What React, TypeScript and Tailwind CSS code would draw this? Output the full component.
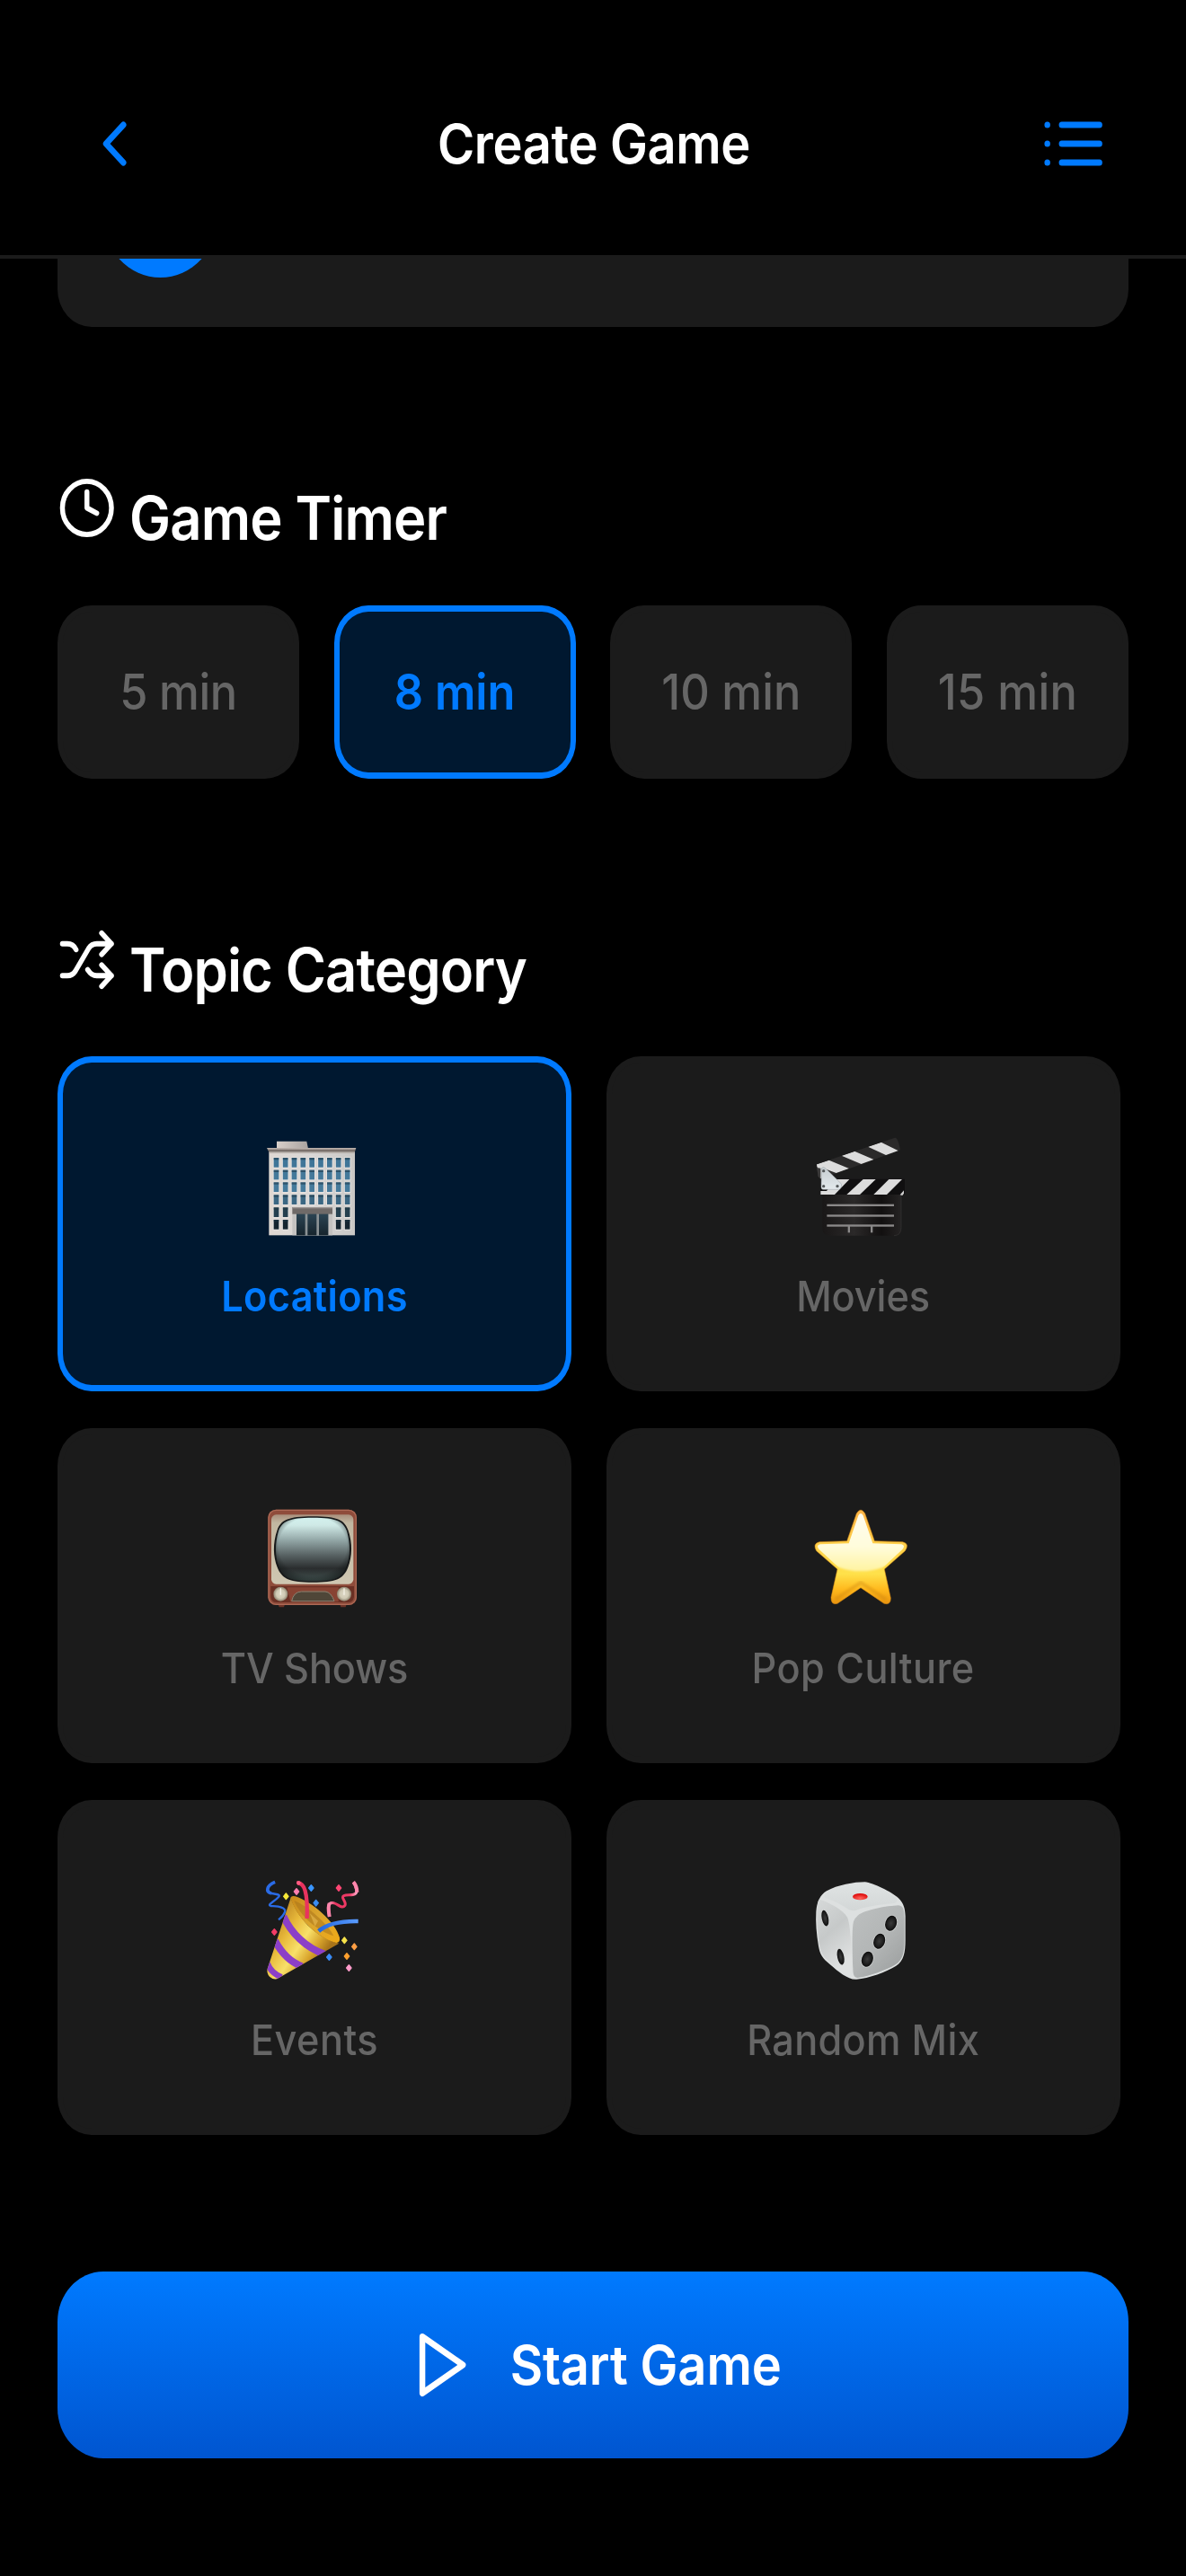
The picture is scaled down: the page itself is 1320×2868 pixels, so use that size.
import React from "react";

type IconProps = { className: string; children: React.ReactNode };

function LineIcon({ className, children }: IconProps) {
  return (
    <svg
      viewBox="0 0 24 24"
      preserveAspectRatio="none"
      fill="none"
      stroke="currentColor"
      strokeWidth="2"
      strokeLinecap="round"
      strokeLinejoin="round"
      className={className}
    >
      {children}
    </svg>
  );
}

const emojiClass = "h-[116px] w-[120px] overflow-visible";

function BuildingEmoji() {
  const cols = [224, 254.5, 284, 313.5, 343, 372.5, 402, 431.5, 461.5];
  const tops = [117, 158, 199, 241, 283, 324];
  const fills = ["#3f7598", "#44799a", "#457a9b", "#3b6783", "#25404f", "#14242f"];
  return (
    <svg viewBox="180 48 360 348" preserveAspectRatio="none" className={emojiClass}>
      <defs>
        <linearGradient id="b-wall" x1="0" y1="0" x2="1" y2="0">
          <stop offset="0" stopColor="#e0d8d2" />
          <stop offset="0.5" stopColor="#d9d7d6" />
          <stop offset="1" stopColor="#c9c7c5" />
        </linearGradient>
        <linearGradient id="b-roof" x1="0" y1="0" x2="0" y2="1">
          <stop offset="0" stopColor="#c7bdb7" />
          <stop offset="1" stopColor="#574d49" />
        </linearGradient>
        <linearGradient id="b-top" x1="0" y1="0" x2="1" y2="0">
          <stop offset="0" stopColor="#d9d0ca" />
          <stop offset="1" stopColor="#a9a3a0" />
        </linearGradient>
        <linearGradient id="b-door" x1="0" y1="0" x2="0" y2="1">
          <stop offset="0" stopColor="#2c4554" />
          <stop offset="1" stopColor="#16242d" />
        </linearGradient>
      </defs>
      <path d="M234 62H334L339 86H234Z" fill="url(#b-top)" />
      <rect x="208" y="92" width="287" height="284" fill="url(#b-wall)" />
      <path d="M201 84H499L495 97H207Z" fill="url(#b-roof)" />
      <rect x="209" y="97" width="285" height="5" fill="#a89f99" opacity="0.7" />
      {tops.map((y, r) =>
        cols.map((x, c) =>
          r >= 4 && c > 1 && c < 7 ? null : (
            <g key={`${r}-${c}`}>
              <rect x={x - 3} y={y - 2} width="23" height="37" fill="#e6e3e1" />
              <rect x={x} y={y} width="17" height="32" fill={fills[r]} />
              <rect x={x} y={y} width="17" height="7" fill="#1c3444" opacity="0.55" />
            </g>
          )
        )
      )}
      <rect x="286" y="303" width="134" height="73" fill="#c4c2c0" />
      <rect x="300" y="303" width="106" height="73" fill="#8b9295" />
      <rect x="300" y="303" width="29" height="73" fill="url(#b-door)" />
      <rect x="337" y="303" width="30" height="73" fill="url(#b-door)" />
      <rect x="375" y="303" width="31" height="73" fill="url(#b-door)" />
      <rect x="286" y="282" width="134" height="23" fill="#6f6a68" />
      <rect x="286" y="282" width="134" height="4" fill="#999492" />
    </svg>
  );
}

function ClapperEmoji() {
  return (
    <svg viewBox="123 48 360 348" preserveAspectRatio="none" className={emojiClass}>
      <defs>
        <linearGradient id="c-body" x1="0" y1="0" x2="1" y2="0">
          <stop offset="0" stopColor="#191717" />
          <stop offset="0.4" stopColor="#2b2929" />
          <stop offset="0.75" stopColor="#121010" />
          <stop offset="1" stopColor="#252323" />
        </linearGradient>
        <linearGradient id="c-hinge" x1="0" y1="0" x2="0" y2="1">
          <stop offset="0" stopColor="#c6cdd1" />
          <stop offset="1" stopColor="#e3e9ec" />
        </linearGradient>
        <clipPath id="c-arm">
          <path d="M147 139L408 50Q419 50 426 91L160 187L152 180Z" />
        </clipPath>
        <clipPath id="c-bar">
          <path d="M160 188H438V240H160Z" />
        </clipPath>
      </defs>
      <path d="M166 238H429V350Q429 377 405 377H190Q166 377 166 350Z" fill="url(#c-body)" />
      <path d="M429 242V350Q429 377 405 377" fill="none" stroke="#353333" strokeWidth="2" />
      <path d="M147 139L408 50Q419 50 426 91L216 168L160 187L152 180Z" fill="#2b2a2a" />
      <g clipPath="url(#c-arm)" fill="#dcdcdc">
        <path d="M318 80L362 65L426 97L386 112Z" />
        <path d="M230 110L273 95L343 125L301 140Z" />
        <path d="M140 141L188 125L257 154L214 169L180 156L160 190L150 150Z" />
      </g>
      <path d="M147 150L160 152V188L152 180Z" fill="#3a3939" />
      <path d="M160 188H441V240H160Z" fill="#100f10" />
      <g clipPath="url(#c-bar)" fill="#dcdcdc">
        <path d="M302 189H344L290 241H246Z" />
        <path d="M388 189H432L380 241H336Z" />
        <path d="M210 189H256L206 241H158V228H180Z" />
      </g>
      <path d="M425 241L438 226V236L433 243Z" fill="#d0d0d0" />
      <path d="M163 152Q168 146 175 151L230 205Q230 223 218 223H170Q162 223 162 215Z" fill="url(#c-hinge)" stroke="#9da3a6" strokeWidth="1.5" />
      <g fill="#55595b">
        <circle cx="170" cy="161" r="5" />
        <circle cx="170" cy="212" r="5" />
        <circle cx="216" cy="212" r="5" />
      </g>
      <g fill="#8b8989">
        <rect x="181" y="272" width="224" height="7" />
        <rect x="181" y="307" width="224" height="7" />
        <rect x="181" y="340" width="224" height="7" />
        <rect x="251" y="345" width="7" height="22" />
        <rect x="327" y="345" width="7" height="22" />
      </g>
    </svg>
  );
}

function TvEmoji() {
  return (
    <svg viewBox="180 60 360 348" preserveAspectRatio="none" className={emojiClass}>
      <defs>
        <linearGradient id="t-screen" x1="0" y1="0" x2="0" y2="1">
          <stop offset="0" stopColor="#d3f1ee" />
          <stop offset="0.12" stopColor="#cfe9e6" />
          <stop offset="0.35" stopColor="#94a8a8" />
          <stop offset="0.6" stopColor="#566061" />
          <stop offset="0.8" stopColor="#2a2d2e" />
          <stop offset="1" stopColor="#41514f" />
        </linearGradient>
        <radialGradient id="t-edge" cx="0.5" cy="0.45" r="0.62">
          <stop offset="0.75" stopColor="#101414" stopOpacity="0" />
          <stop offset="1" stopColor="#101414" stopOpacity="0.7" />
        </radialGradient>
        <linearGradient id="t-frame" x1="0" y1="0" x2="0" y2="1">
          <stop offset="0" stopColor="#a98f7c" />
          <stop offset="0.12" stopColor="#c1b7a1" />
          <stop offset="1" stopColor="#cfc7b2" />
        </linearGradient>
        <radialGradient id="t-knob">
          <stop offset="0" stopColor="#ded9c6" />
          <stop offset="0.6" stopColor="#d0cab4" />
          <stop offset="1" stopColor="#8d8470" />
        </radialGradient>
      </defs>
      <path d="M238 376H262L258 388H242ZM444 376H468L464 388H448Z" fill="#6c3327" />
      <rect x="205" y="62" width="296" height="319" rx="26" fill="#8f4c3b" />
      <rect x="207" y="64" width="292" height="315" rx="25" fill="none" stroke="#ad6a56" strokeWidth="4" />
      <path d="M214 318H492V350Q492 372 472 372H234Q214 372 214 350Z" fill="#6a3024" />
      <path d="M268 322H440V370H280Z" fill="#884333" />
      <rect x="216" y="79" width="274" height="232" rx="16" fill="url(#t-frame)" />
      <path d="M354 85C440 85 460 98 472 130C488 175 486 220 472 255C456 296 430 305 354 305C280 305 252 296 236 255C222 220 220 175 236 130C248 98 270 85 354 85Z" fill="#17191a" />
      <path d="M354 89C436 89 456 102 468 134C480 175 480 218 467 250C452 290 428 301 354 301C282 301 256 290 241 250C228 218 228 175 240 134C252 102 274 89 354 89Z" fill="url(#t-screen)" />
      <path d="M354 89C436 89 456 102 468 134C480 175 480 218 467 250C452 290 428 301 354 301C282 301 256 290 241 250C228 218 228 175 240 134C252 102 274 89 354 89Z" fill="url(#t-edge)" />
      <path d="M284 368Q290 337 316 336H396Q416 338 426 368Z" fill="#4f4638" stroke="#8b8271" strokeWidth="3" />
      <circle cx="247" cy="344" r="24" fill="url(#t-knob)" />
      <circle cx="459" cy="344" r="24" fill="url(#t-knob)" />
      <path d="M247 326V346M459 326V346" stroke="#f3f0e4" strokeWidth="4" strokeLinecap="round" />
    </svg>
  );
}

function StarEmoji() {
  const star =
    "M370 75Q384 52 398 75L430 167L524 170Q548 176 532 200L463 261L484 358Q484 382 462 376L384 323L306 376Q284 382 285 355L306 261L236 200Q222 176 246 170L338 167Z";
  return (
    <svg viewBox="213 60 360 348" preserveAspectRatio="none" className={emojiClass}>
      <defs>
        <linearGradient id="s-fill" x1="0" y1="0" x2="0" y2="1">
          <stop offset="0" stopColor="#fdb548" />
          <stop offset="0.45" stopColor="#ffd54a" />
          <stop offset="0.68" stopColor="#ffe14a" />
          <stop offset="0.85" stopColor="#ffb81c" />
          <stop offset="1" stopColor="#e8930e" />
        </linearGradient>
        <linearGradient id="s-shine" x1="0" y1="0" x2="0" y2="1">
          <stop offset="0" stopColor="#fffdf0" />
          <stop offset="0.6" stopColor="#fffcdc" />
          <stop offset="1" stopColor="#fff3a0" />
        </linearGradient>
        <clipPath id="s-clip">
          <path d="M376 82Q384 68 392 82L424 175L520 178Q534 182 524 194L456 258L476 366L384 314L293 366L313 258L244 194Q234 182 248 178L344 175Z" />
        </clipPath>
        <filter id="s-soft" x="-10%" y="-10%" width="120%" height="120%">
          <feGaussianBlur stdDeviation="3" />
        </filter>
      </defs>
      <path d={star} fill="url(#s-fill)" />
      <path d={star} fill="none" stroke="#d98a16" strokeWidth="3" opacity="0.55" />
      <g clipPath="url(#s-clip)">
        <path d="M220 60H548V200Q520 234 460 254Q384 282 308 254Q250 234 220 200Z" fill="url(#s-shine)" filter="url(#s-soft)" />
      </g>
      <path d="M300 362L384 306L468 362" fill="none" stroke="#c9820f" strokeWidth="12" opacity="0.35" filter="url(#s-soft)" />
    </svg>
  );
}

function PartyEmoji() {
  const confetti: [number, number, string][] = [
    [265, 124, "#f6e838"],
    [300, 108, "#ff7fb0"],
    [349, 96, "#3a96ff"],
    [365, 146, "#3a8cf0"],
    [441, 96, "#ff4674"],
    [226, 243, "#f23c66"],
    [460, 271, "#f6e24a"],
    [493, 292, "#ff9f45"],
    [468, 324, "#ffa02e"],
    [409, 327, "#3a8cf8"],
    [475, 363, "#ff9ccb"],
  ];
  return (
    <svg viewBox="180 72 360 348" preserveAspectRatio="none" className={emojiClass}>
      <defs>
        <linearGradient id="p-cone" x1="0.15" y1="0.3" x2="0.75" y2="0.75">
          <stop offset="0" stopColor="#c8942a" />
          <stop offset="0.25" stopColor="#e8b93a" />
          <stop offset="0.55" stopColor="#f8e06a" />
          <stop offset="0.8" stopColor="#d9a52c" />
          <stop offset="1" stopColor="#a8741a" />
        </linearGradient>
        <linearGradient id="p-mouth" x1="0" y1="0" x2="1" y2="1">
          <stop offset="0" stopColor="#c88a1a" />
          <stop offset="0.5" stopColor="#dba62e" />
          <stop offset="1" stopColor="#f0a916" />
        </linearGradient>
        <linearGradient id="p-blue" x1="0" y1="0" x2="1" y2="0">
          <stop offset="0" stopColor="#2268e0" />
          <stop offset="1" stopColor="#5a9cff" />
        </linearGradient>
        <linearGradient id="p-pink" x1="0" y1="0" x2="1" y2="0">
          <stop offset="0" stopColor="#ff9fc0" />
          <stop offset="0.25" stopColor="#e83560" />
          <stop offset="0.75" stopColor="#f03a66" />
          <stop offset="1" stopColor="#ffa5c4" />
        </linearGradient>
        <clipPath id="p-clip">
          <path d="M281 128C300 190 360 260 442 281L240 397Q226 406 210 392Q199 380 203 366Z" />
        </clipPath>
      </defs>
      <path d="M228 76C200 88 196 108 216 114C234 118 248 116 240 126C226 142 200 152 214 156C236 158 262 158 262 174Q256 190 240 202" fill="none" stroke="#2a6be6" strokeWidth="7" />
      <path d="M228 76C200 88 196 108 216 114" fill="none" stroke="#2a6be6" strokeWidth="11" />
      <path d="M281 128C300 190 360 260 442 281L240 397Q226 406 210 392Q199 380 203 366Z" fill="url(#p-cone)" />
      <g clipPath="url(#p-clip)" fill="none" stroke="#8c3fc8">
        <path d="M256 190C282 246 330 296 396 318" strokeWidth="24" />
        <path d="M228 272C246 306 276 342 318 358" strokeWidth="24" />
        <path d="M202 346C210 368 226 384 250 394" strokeWidth="20" />
      </g>
      <path d="M280 128Q284 120 296 124C352 142 430 210 444 262Q446 280 432 279C370 262 300 196 280 128Z" fill="url(#p-mouth)" />
      <path d="M292 138C338 156 404 216 424 256C370 240 312 190 292 138Z" fill="#a9741c" opacity="0.55" />
      <path d="M344 180L372 206L362 224Z" fill="#e9bd52" opacity="0.6" />
      <path d="M302 80C326 76 338 110 335 198" fill="none" stroke="#e9335f" strokeWidth="13" />
      <circle cx="307" cy="79" r="7" fill="#ff5b82" />
      <path d="M374 240C404 214 450 206 506 207" fill="none" stroke="url(#p-blue)" strokeWidth="14" />
      <path d="M410 192C406 164 402 142 424 146C440 150 452 168 462 154C468 142 446 128 458 122C474 116 508 126 499 98Q496 84 490 76" fill="none" stroke="url(#p-pink)" strokeWidth="9" />
      <path d="M410 192C407 172 404 158 410 148M502 110Q502 90 490 76" fill="none" stroke="#ff86ac" strokeWidth="12" />
      {confetti.map(([x, y, color]) => (
        <path key={`${x}-${y}`} d={`M${x} ${y - 10}L${x + 8} ${y}L${x} ${y + 10}L${x - 8} ${y}Z`} fill={color} stroke={color} strokeWidth="4" strokeLinejoin="round" />
      ))}
    </svg>
  );
}

function DiceEmoji() {
  const pips: [number, number, number, number, number][] = [
    [295, 197, 11, 27, -12],
    [347, 326, 11, 27, -12],
    [515, 214, 19, 26, 18],
    [476, 274, 19, 26, 18],
    [436, 334, 19, 26, 18],
  ];
  return (
    <svg viewBox="243 72 360 348" preserveAspectRatio="none" className={emojiClass}>
      <defs>
        <linearGradient id="d-left" x1="0" y1="0" x2="0.4" y2="1">
          <stop offset="0" stopColor="#d6d9d9" />
          <stop offset="0.5" stopColor="#c6c9c9" />
          <stop offset="1" stopColor="#dfe1e1" />
        </linearGradient>
        <linearGradient id="d-right" x1="0.1" y1="0" x2="0.9" y2="1">
          <stop offset="0" stopColor="#bcbfbf" />
          <stop offset="0.5" stopColor="#b3b6b6" />
          <stop offset="1" stopColor="#9b9e9e" />
        </linearGradient>
        <linearGradient id="d-top" x1="0" y1="0" x2="0" y2="1">
          <stop offset="0" stopColor="#dfe3e3" />
          <stop offset="1" stopColor="#d3d7d7" />
        </linearGradient>
        <radialGradient id="d-pip">
          <stop offset="0" stopColor="#3a3a3a" />
          <stop offset="0.6" stopColor="#222222" />
          <stop offset="1" stopColor="#0d0d0d" />
        </radialGradient>
        <radialGradient id="d-red" cx="0.5" cy="0.75" r="0.6">
          <stop offset="0" stopColor="#ff6a60" />
          <stop offset="1" stopColor="#e01010" />
        </radialGradient>
      </defs>
      <path d="M300 106C336 86 392 76 428 76C456 80 516 108 540 130C558 148 562 165 563 190V270C563 310 558 340 532 356C500 376 440 398 400 401C374 404 340 376 310 350C286 330 278 318 273 290C266 250 263 210 265 175C268 140 278 120 300 106Z" fill="#dde0e0" />
      <path d="M276 134C300 140 360 170 370 196C382 230 386 330 380 386C374 396 340 370 312 346C288 326 281 312 276 286C270 246 266 180 270 150Q272 136 276 134Z" fill="url(#d-left)" />
      <path d="M404 188C430 168 500 156 540 154C558 156 559 172 560 196V270C560 308 555 336 530 352C498 371 440 392 404 396C392 396 388 386 388 366C386 300 384 232 390 208Q394 196 404 188Z" fill="url(#d-right)" />
      <path d="M304 110C338 92 394 80 428 80C458 86 508 110 530 128Q544 144 520 148C470 152 424 160 400 170Q388 174 374 168C350 152 320 138 296 130Q284 120 304 110Z" fill="url(#d-top)" />
      <ellipse cx="412" cy="125" rx="25" ry="11" fill="url(#d-red)" />
      {pips.map(([x, y, rx, ry, a]) => (
        <g key={`${x}-${y}`} transform={`rotate(${a} ${x} ${y})`}>
          <ellipse cx={x} cy={y} rx={rx + 2} ry={ry + 2} fill="#d4d6d6" />
          <ellipse cx={x} cy={y} rx={rx} ry={ry} fill="url(#d-pip)" />
        </g>
      ))}
    </svg>
  );
}

const timers = [
  { label: "5 min", tracking: "tracking-[-0.4px]" },
  { label: "8 min", tracking: "", selected: true },
  { label: "10 min", tracking: "" },
  { label: "15 min", tracking: "tracking-[0.3px]" },
];

const topics = [
  { label: "Locations", tracking: "tracking-[0.34px]", icon: <BuildingEmoji />, selected: true },
  { label: "Movies", tracking: "tracking-[-0.1px]", icon: <ClapperEmoji /> },
  { label: "TV Shows", tracking: "tracking-[-0.1px]", icon: <TvEmoji /> },
  { label: "Pop Culture", tracking: "tracking-[0.42px]", icon: <StarEmoji /> },
  { label: "Events", tracking: "tracking-[0.48px]", icon: <PartyEmoji /> },
  { label: "Random Mix", tracking: "tracking-[0.3px]", icon: <DiceEmoji /> },
];

const selectedBox = "border-[#007aff] bg-[#001830] font-semibold text-[#007aff]";
const plainBox = "border-[#1b1b1b] bg-[#1b1b1b] font-medium text-[#666666]";

export default function App() {
  return (
    <div className="h-[2868px] w-[1320px] overflow-hidden bg-black font-[Inter,sans-serif] text-white">
      <header className="flex h-[288px] items-start justify-between border-b-4 border-[#1b1b1b] pl-[89px] pr-[87px] pt-[117.5px]">
        <button className="text-[#007aff]" aria-label="Back">
          <LineIcon className="h-[84px] w-[77.3px]">
            <path d="M15 18 9 12 15 6" />
          </LineIcon>
        </button>
        <h1 className="flex h-[84px] scale-y-[1.087] items-center text-[56px] font-semibold leading-none tracking-[-0.37px]">
          Create Game
        </h1>
        <button className="text-[#007aff]" aria-label="Topics">
          <LineIcon className="h-[84px] w-[77.3px]">
            <path d="M8 6H21M8 12H21M8 18H21M3 6H3.01M3 12H3.01M3 18H3.01" />
          </LineIcon>
        </button>
      </header>

      <main className="px-16">
        <div className="h-[76px] overflow-hidden rounded-b-[38px_42px] bg-[#1b1b1b] pl-[50px]">
          <div className="mt-[-119px] h-[140px] w-[129px] rounded-[50%] bg-[#007aff]" />
        </div>

        <section className="mt-[166px]">
          <h2 className="flex h-[71px] items-center gap-[14.5px]">
            <LineIcon className="h-[71px] w-[65.5px]">
              <circle cx="12" cy="12" r="10" />
              <path d="M12 6V12L16 14" />
            </LineIcon>
            <span className="mt-[23px] scale-y-[1.087] text-[61.5px] font-semibold leading-none tracking-[-0.84px]">Game Timer</span>
          </h2>
          <div className="mt-[73px] grid grid-cols-4 gap-[38.6px]">
            {timers.map((t) => (
              <button
                key={t.label}
                className={`flex h-[192.5px] items-center justify-center rounded-[38px/42px] border-x-[6px] border-y-[7px] text-[50.5px] leading-none ${t.selected ? selectedBox : plainBox}`}
              >
                <span className={`scale-y-[1.087] ${t.tracking}`}>{t.label}</span>
              </button>
            ))}
          </div>
        </section>

        <section className="mt-[166px]">
          <h2 className="flex h-[71px] items-center gap-[14.5px]">
            <LineIcon className="h-[71px] w-[65.5px]">
              <path d="m18 14 4 4-4 4M18 2l4 4-4 4M2 18h1.973a4 4 0 0 0 3.3-1.7l5.454-8.6a4 4 0 0 1 3.3-1.7H22M2 6h1.972a4 4 0 0 1 3.6 2.2M22 18h-6.041a4 4 0 0 1-3.3-1.8l-.359-.45" />
            </LineIcon>
            <span className="mt-[23px] scale-y-[1.087] text-[61.5px] font-semibold leading-none tracking-[-0.9px]">Topic Category</span>
          </h2>
          <div className="mt-[72px] grid grid-cols-[572px_572px] gap-x-[38.6px] gap-y-[41px]">
            {topics.map((t) => (
              <button
                key={t.label}
                className={`flex h-[373px] flex-col items-center rounded-[38px/42px] border-x-[6px] border-y-[7px] pt-[83px] ${t.selected ? selectedBox : plainBox}`}
              >
                {t.icon}
                <span className={`mt-[34.5px] h-[54px] scale-y-[1.087] text-[43.3px] leading-[54px] ${t.tracking}`}>{t.label}</span>
              </button>
            ))}
          </div>
        </section>

        <button className="mt-[152px] flex h-[208px] w-full items-center justify-center gap-[36px] rounded-[51px/56px] bg-linear-to-b from-[#007aff] to-[#0055d0] pl-[4px]">
          <LineIcon className="h-[84px] w-[77.3px]">
            <path d="M5 3 19 12 5 21Z" />
          </LineIcon>
          <span className="scale-y-[1.087] text-[56px] font-semibold leading-none tracking-[-0.14px]">Start Game</span>
        </button>
      </main>
    </div>
  );
}
